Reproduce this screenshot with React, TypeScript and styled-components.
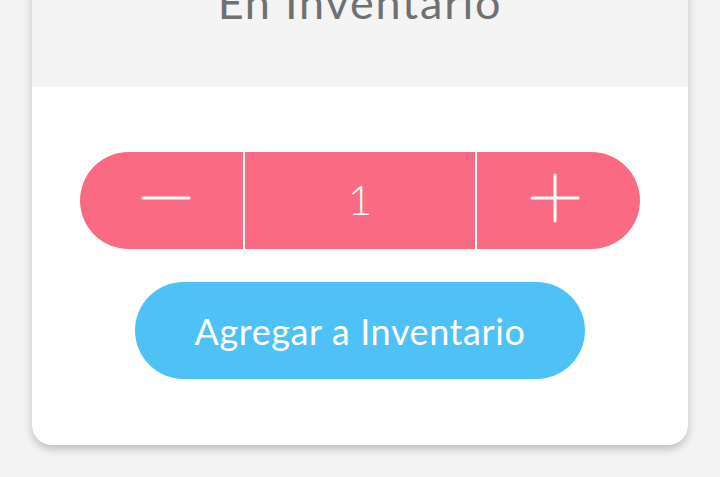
import React, { useState } from "react";
import styled, { createGlobalStyle } from "styled-components";

const GlobalStyle = createGlobalStyle`
  html, body {
    margin: 0;
    padding: 0;
    background: #f3f3f3;
    font-family: Lato, "Noto Sans", sans-serif;
  }
`;

const App: React.FC = () => {
  const [count, setCount] = useState(1);

  return (
    <>
      <GlobalStyle />
      <Page>
        <Card>
          <Header>
            <Title>En Inventario</Title>
          </Header>
          <Body>
            <Stepper>
              <StepButton side="left" onClick={() => setCount((c) => Math.max(1, c - 1))}>
                <svg width="50" height="6" viewBox="0 0 50 6">
                  <line x1="2" y1="3" x2="48" y2="3" stroke="#fff" strokeWidth="3" strokeLinecap="round" />
                </svg>
              </StepButton>
              <Divider />
              <Count>{count}</Count>
              <Divider />
              <StepButton side="right" onClick={() => setCount((c) => c + 1)}>
                <svg width="50" height="50" viewBox="0 0 50 50">
                  <line x1="2" y1="25" x2="48" y2="25" stroke="#fff" strokeWidth="3" strokeLinecap="round" />
                  <line x1="25" y1="2" x2="25" y2="48" stroke="#fff" strokeWidth="3" strokeLinecap="round" />
                </svg>
              </StepButton>
            </Stepper>
            <AddButton>Agregar a Inventario</AddButton>
          </Body>
        </Card>
      </Page>
    </>
  );
};

const Page = styled.div`
  width: 720px;
  height: 477px;
  overflow: hidden;
  padding: 0 32px;
  box-sizing: border-box;
`;

const Card = styled.div`
  margin-top: -60px;
  background: #ffffff;
  border-radius: 20px;
  overflow: hidden;
  box-shadow: 0 4px 8px rgba(0, 0, 0, 0.22);
`;

const Header = styled.div`
  background: #f4f4f4;
  height: 147px;
  display: flex;
  justify-content: center;
  align-items: flex-start;
`;

const Title = styled.h2`
  margin: 0;
  margin-top: 40px;
  font-size: 45px;
  line-height: 1;
  font-weight: 400;
  letter-spacing: 1.8px;
  color: #707070;
`;

const Body = styled.div`
  display: flex;
  flex-direction: column;
  align-items: center;
  padding: 65px 48px 66px;
  gap: 33px;
`;

const Stepper = styled.div`
  width: 100%;
  height: 97px;
  display: flex;
  background: #fa6a82;
  border-radius: 49px;
  overflow: hidden;
`;

const StepButton = styled.button<{ side: "left" | "right" }>`
  width: 163px;
  flex: none;
  border: none;
  background: transparent;
  display: flex;
  align-items: center;
  justify-content: center;
  padding: 0 0 5px;
  padding-left: ${(p) => (p.side === "left" ? "8px" : "0")};
  padding-right: ${(p) => (p.side === "right" ? "8px" : "0")};
  cursor: pointer;
`;

const Divider = styled.div`
  width: 2px;
  flex: none;
  background: #ffffff;
`;

const Count = styled.div`
  flex: 1;
  display: flex;
  align-items: center;
  justify-content: center;
  padding-bottom: 4px;
  color: #ffffff;
  font-size: 42px;
  font-weight: 300;
`;

const AddButton = styled.button`
  width: 450px;
  height: 97px;
  border: none;
  border-radius: 49px;
  background: #4ec1f7;
  color: #ffffff;
  font-family: Lato, "Noto Sans", sans-serif;
  font-size: 36px;
  font-weight: 400;
  letter-spacing: 0.6px;
  cursor: pointer;
`;

export default App;
